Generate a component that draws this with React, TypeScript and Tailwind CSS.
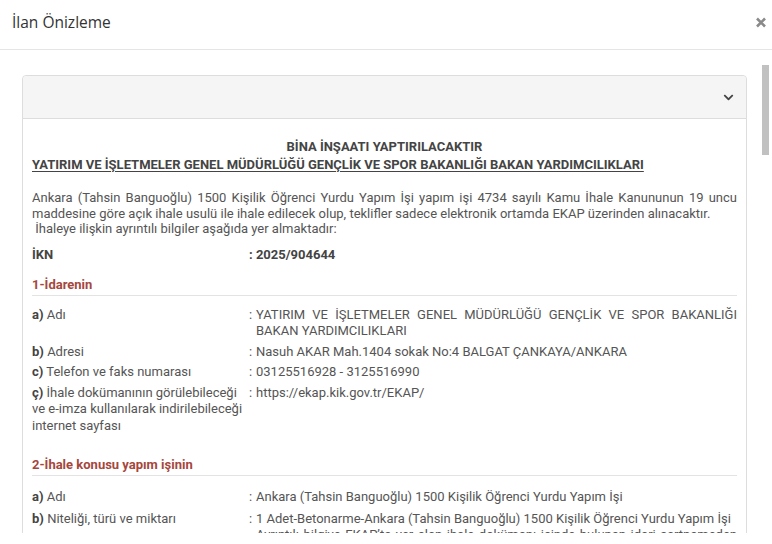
import { FaChevronDown } from "react-icons/fa";

type Row = { key: string; label: string; value: string[]; justify?: boolean };

const idare: Row[] = [
  {
    key: "a)",
    label: "Adı",
    value: ["YATIRIM VE İŞLETMELER GENEL MÜDÜRLÜĞÜ GENÇLİK VE SPOR BAKANLIĞI BAKAN YARDIMCILIKLARI"],
    justify: true,
  },
  { key: "b)", label: "Adresi", value: ["Nasuh AKAR Mah.1404 sokak No:4 BALGAT ÇANKAYA/ANKARA"] },
  { key: "c)", label: "Telefon ve faks numarası", value: ["03125516928 - 3125516990"] },
  {
    key: "ç)",
    label: "İhale dokümanının görülebileceği ve e-imza kullanılarak indirilebileceği internet sayfası",
    value: ["https://ekap.kik.gov.tr/EKAP/"],
  },
];

const isin: Row[] = [
  { key: "a)", label: "Adı", value: ["Ankara (Tahsin Banguoğlu) 1500 Kişilik Öğrenci Yurdu Yapım İşi"] },
  {
    key: "b)",
    label: "Niteliği, türü ve miktarı",
    value: [
      "1 Adet-Betonarme-Ankara (Tahsin Banguoğlu) 1500 Kişilik Öğrenci Yurdu Yapım İşi",
      "Ayrıntılı bilgiye EKAP’ta yer alan ihale dokümanı içinde bulunan idari şartnameden ulaşılabilir.",
    ],
    justify: true,
  },
];

function DetailRow({ row }: { row: Row }) {
  return (
    <div className="flex py-[2px] leading-[16.5px]">
      <div className="w-[217px] shrink-0 pr-1">
        <span className="font-bold text-[#444]">{row.key}</span> {row.label}
      </div>
      <div className="w-[7px] shrink-0">:</div>
      <div className="flex-1">
        {row.value.map((v, i) => (
          <div key={i} className={row.justify ? "text-justify" : ""}>
            {v}
          </div>
        ))}
      </div>
    </div>
  );
}

function SectionTitle({ children, className }: { children: string; className: string }) {
  return (
    <div
      className={`border-b border-[#e3e3e3] pb-[2px] text-[13px] font-bold leading-[17px] text-[#a5473d] ${className}`}
    >
      {children}
    </div>
  );
}

export default function App() {
  return (
    <div className="h-[544px] w-[772px] overflow-hidden bg-white font-['Roboto',sans-serif] text-[13px] text-[#555]">
      <div className="flex h-[50px] items-center justify-between border-b border-[#e5e5e5] pb-[4px] pl-[12px] pr-[6px]">
        <h4 className="font-['Open_Sans',sans-serif] text-[15.5px] text-[#333]">İlan Önizleme</h4>
        <svg width="10" height="11" viewBox="0 0 10 11">
          <path d="M1 1.5 L9 9.5 M9 1.5 L1 9.5" stroke="#8a8a8a" strokeWidth="2.6" />
        </svg>
      </div>

      <div className="relative h-[483px] overflow-hidden pl-[22px] pr-[25px] pt-[25px]">
        <div className="absolute right-[3px] top-[15px] h-[90px] w-[7px] bg-[#c1c1c1]" />

        <div className="rounded-[4px] border border-[#ddd]">
          <div className="flex h-[43px] items-center justify-end rounded-t-[4px] border-b border-[#ddd] bg-[#f5f5f5] pr-[12px]">
            <FaChevronDown className="h-[11px] w-[11px] text-[#444]" />
          </div>

          <div className="px-[9px] pb-4 pt-[19px]">
            <div className="font-bold leading-[18px] text-[#444]">
              <div className="text-center">BİNA İNŞAATI YAPTIRILACAKTIR</div>
              <div className="underline underline-offset-2">
                YATIRIM VE İŞLETMELER GENEL MÜDÜRLÜĞÜ GENÇLİK VE SPOR BAKANLIĞI BAKAN YARDIMCILIKLARI
              </div>
            </div>

            <p className="mt-[16px] text-justify leading-[15.5px]">
              Ankara (Tahsin Banguoğlu) 1500 Kişilik Öğrenci Yurdu Yapım İşi yapım işi 4734 sayılı Kamu İhale
              Kanununun 19 uncu maddesine göre açık ihale usulü ile ihale edilecek olup, teklifler sadece elektronik
              ortamda EKAP üzerinden alınacaktır.
              <br />
              &nbsp;İhaleye ilişkin ayrıntılı bilgiler aşağıda yer almaktadır:
            </p>

            <div className="mt-[9px] flex font-bold leading-[17px] text-[#444]">
              <div className="w-[217px] shrink-0">İKN</div>
              <div>: 2025/904644</div>
            </div>

            <SectionTitle className="mt-[13px]">1-İdarenin</SectionTitle>
            <div className="mt-[9px]">
              {idare.map((r) => (
                <DetailRow key={r.key} row={r} />
              ))}
            </div>

            <SectionTitle className="mt-[20px]">2-İhale konusu yapım işinin</SectionTitle>
            <div className="mt-[11px] flex flex-col gap-[1px]">
              {isin.map((r) => (
                <DetailRow key={r.key} row={r} />
              ))}
            </div>
          </div>
        </div>
      </div>
    </div>
  );
}
